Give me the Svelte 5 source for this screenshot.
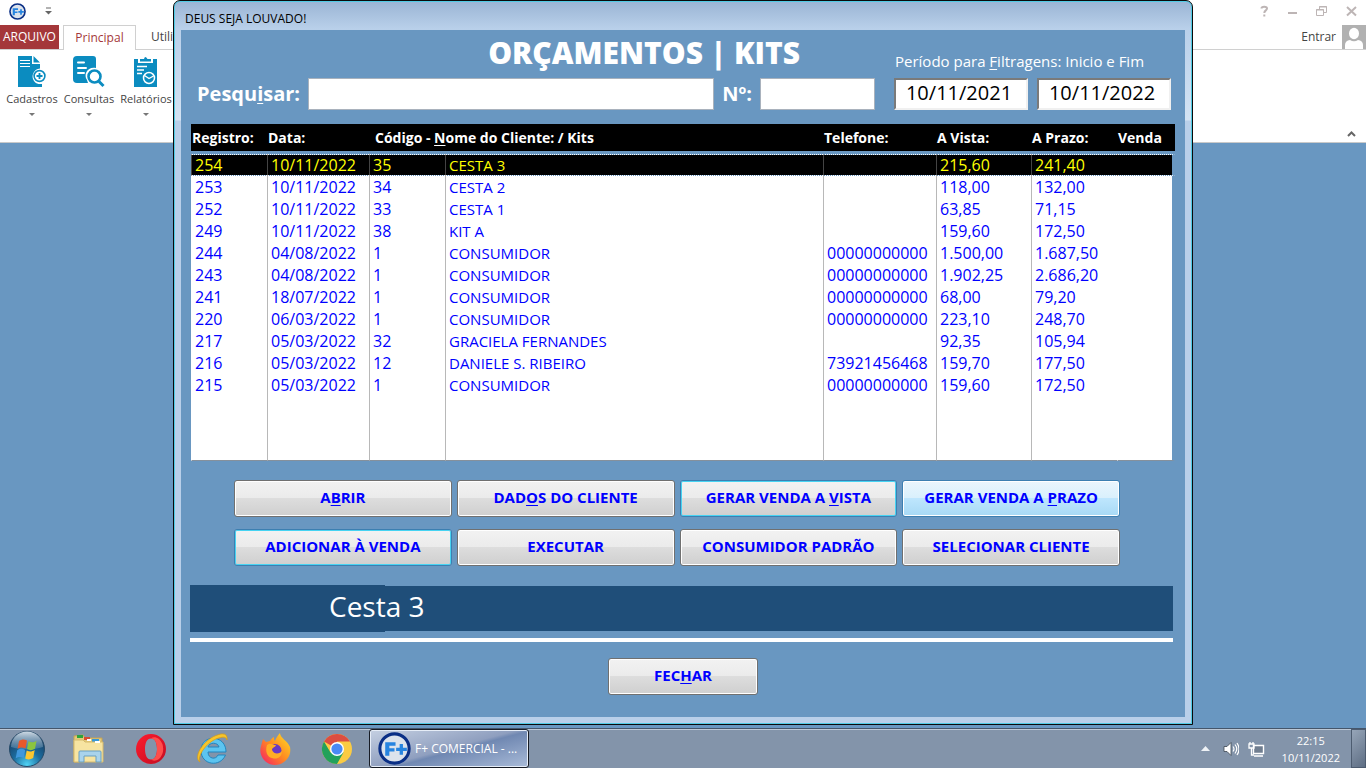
<script>
  let search = $state('');
  let number = $state('');
  let from = $state('10/11/2021');
  let to = $state('10/11/2022');
  let selected = $state(0);

  const rows = [
    ['254', '10/11/2022', '35', 'CESTA 3', '', '215,60', '241,40'],
    ['253', '10/11/2022', '34', 'CESTA 2', '', '118,00', '132,00'],
    ['252', '10/11/2022', '33', 'CESTA 1', '', '63,85', '71,15'],
    ['249', '10/11/2022', '38', 'KIT A', '', '159,60', '172,50'],
    ['244', '04/08/2022', '1', 'CONSUMIDOR', '00000000000', '1.500,00', '1.687,50'],
    ['243', '04/08/2022', '1', 'CONSUMIDOR', '00000000000', '1.902,25', '2.686,20'],
    ['241', '18/07/2022', '1', 'CONSUMIDOR', '00000000000', '68,00', '79,20'],
    ['220', '06/03/2022', '1', 'CONSUMIDOR', '00000000000', '223,10', '248,70'],
    ['217', '05/03/2022', '32', 'GRACIELA FERNANDES', '', '92,35', '105,94'],
    ['216', '05/03/2022', '12', 'DANIELE S. RIBEIRO', '73921456468', '159,70', '177,50'],
    ['215', '05/03/2022', '1', 'CONSUMIDOR', '00000000000', '159,60', '172,50']
  ];

  // Each label is split around its access key.
  const actions = [
    { text: ['A', 'B', 'RIR'] },
    { text: ['DAD', 'O', 'S DO CLIENTE'] },
    { text: ['GERAR VENDA A ', 'V', 'ISTA'], kind: 'glow' },
    { text: ['GERAR VENDA A ', 'P', 'RAZO'], kind: 'hot' },
    { text: ['ADICIONAR À VENDA', '', ''], kind: 'glow' },
    { text: ['EXECUTAR', '', ''] },
    { text: ['CONSUMIDOR PADRÃO', '', ''] },
    { text: ['SELECIONAR CLIENTE', '', ''] }
  ];
</script>

{#snippet logo(size)}
  <svg width={size} height={size} viewBox="0 0 32 32" aria-hidden="true">
    <circle cx="16" cy="16" r="14.2" fill="#dce3ec" stroke="#0a2f86" stroke-width="3" />
    <path d="M7 10h10v3.4h-6v2.4h5v3.2h-5v4H7zM21 11.6h3.2v3.6H28v3.2h-3.8V22H21v-3.6h-3.4v-3.2H21z" fill="#2684e0" />
  </svg>
{/snippet}

<div class="screen">
  <main class="desktop">
    <section class="ribbon">
      <div class="quick">
        {@render logo(17)}
        <svg width="7" height="8" viewBox="0 0 7 8" aria-hidden="true"><path d="M1 1h5" stroke="#666" /><path d="M0 4h7L3.500 7.500z" fill="#666" /></svg>
        <div class="window-tools">
          <svg width="9" height="12" viewBox="0 0 9 12"><path d="M1.500 3.500C1.500 1 7 1 7 3.500 7 5.500 4.300 5.300 4.300 8M4.300 9.500v2" fill="none" stroke="#bdb5b5" stroke-width="2" /></svg>
          <svg width="9" height="12" viewBox="0 0 9 12"><path d="M0 8h9" stroke="#bdb5b5" stroke-width="2" /></svg>
          <svg width="11" height="12" viewBox="0 0 11 12"><path d="M3.500 4V1.500h7v6H8M3 2h8M.5 4.500h7v6h-7zM0 5h8" fill="none" stroke="#bdb5b5" /></svg>
          <svg width="11" height="12" viewBox="0 0 11 12"><path d="M1 2l9 8.500M10 2L1 10.500" stroke="#bdb5b5" stroke-width="2" /></svg>
        </div>
      </div>
      <nav class="tabs">
        <button class="file">ARQUIVO</button>
        <button class="tab current">Principal</button>
        <button class="tab">Utilitários</button>
        <a class="signin" href="#entrar">Entrar</a>
        <svg class="avatar" width="24" height="24" viewBox="0 0 24 24" aria-hidden="true">
          <path d="M0 0h24v24H0z" fill="#b1b1b1" />
          <ellipse cx="12" cy="8.500" rx="5" ry="5.700" fill="#fff" />
          <path d="M3 24v-4c0-3 2-4.500 5-5 2.500 1.600 5.500 1.600 8 0 3 .5 5 2 5 5v4z" fill="#fff" />
        </svg>
      </nav>
      <div class="groups">
        <button class="group">
          <svg width="32" height="32" viewBox="0 0 32 32">
            <path d="M2 0h14v8h8v4.500a8 8 0 0 0-6 12.500c1 1.500 2.500 2.600 4.500 3H26v3H2zM17.500 0L24 6.500h-6.500z" fill="#0b8cc0" />
            <path d="M4 4.500h10M4 7.500h10M4 10.500h10" stroke="#fff" />
            <circle cx="23.500" cy="20" r="5.400" fill="#fff" stroke="#0b8cc0" stroke-width="1.600" />
            <path d="M23.500 17v6M20.500 20h6" stroke="#0b8cc0" stroke-width="1.800" />
          </svg>
          <span>Cadastros</span><i></i>
        </button>
        <button class="group">
          <svg width="32" height="32" viewBox="0 0 32 32">
            <path d="M4 0h16q3 0 3 3v9c-8-2-13 6-9 12l1 3H4q-4 0-4-4V4q0-4 4-4z" fill="#0b8cc0" />
            <path d="M5 6.500h6M5 12h8M5 17h6" stroke="#fff" stroke-width="2" stroke-linecap="round" />
            <circle cx="21.500" cy="20.500" r="6" fill="#fff" stroke="#0b8cc0" stroke-width="2.600" />
            <path d="M26 25.500l4.500 4.500" stroke="#0b8cc0" stroke-width="3" />
          </svg>
          <span>Consultas</span><i></i>
        </button>
        <button class="group">
          <svg width="32" height="32" viewBox="0 0 32 32">
            <path d="M4 3h4v4h15V3h4v28H4z" fill="#0b8cc0" />
            <path d="M10 5.500V3h4q1-4 3.500 0H21v2.500z" fill="#0b8cc0" />
            <path d="M7 10.500h10M7 14h7M7 17.500h5" stroke="#fff" stroke-width="1.400" />
            <circle cx="19" cy="22" r="5.500" fill="none" stroke="#fff" stroke-width="1.500" />
            <path d="M14.500 19.500l4.500 3 4.500-2.500" fill="none" stroke="#fff" stroke-width="1.400" />
          </svg>
          <span>Relatórios</span><i></i>
        </button>
        <svg class="collapse" width="9" height="6" viewBox="0 0 9 6"><path d="M1 5l3.500-3.500L8 5" fill="none" stroke="#666" stroke-width="2" /></svg>
      </div>
    </section>

    <div class="stage">
      <section class="dialog" aria-label="Orçamentos">
        <header class="caption">DEUS SEJA LOUVADO!</header>
        <div class="form">
          <div class="filters">
            <h1>ORÇAMENTOS | KITS</h1>
            <label class="period" for="from">Período para <u>F</u>iltragens: Inicio e Fim</label>
            <div class="fields">
              <label for="search">Pesqu<u>i</u>sar:</label>
              <input id="search" class="wide" bind:value={search} />
              <label for="number">Nº:</label>
              <input id="number" class="short" bind:value={number} />
            </div>
            <div class="dates">
              <input id="from" bind:value={from} />
              <input aria-label="Fim" bind:value={to} />
            </div>
          </div>

          <table>
            <colgroup>
              <col class="c-id" /><col class="c-date" /><col class="c-code" /><col />
              <col class="c-phone" /><col class="c-cash" /><col class="c-term" /><col class="c-sale" />
            </colgroup>
            <thead>
              <tr>
                <th>Registro:</th><th>Data:</th><th class="client" colspan="2">Código - <u>N</u>ome do Cliente: / Kits</th>
                <th>Telefone:</th><th>A Vista:</th><th>A Prazo:</th><th>Venda</th>
              </tr>
            </thead>
            <tbody>
              {#each rows as row, r}
                <tr class:selected={selected === r} onclick={() => (selected = r)}>
                  {#each row as cell, c}<td class:name={c === 3}>{cell}</td>{/each}<td></td>
                </tr>
              {/each}
              <tr class="rest"><td></td><td></td><td></td><td></td><td></td><td></td><td></td><td></td></tr>
            </tbody>
          </table>

          <div class="actions">
            {#each actions as { text, kind }}
              <button class="push {kind ?? ''}">{text[0]}<u>{text[1]}</u>{text[2]}</button>
            {/each}
          </div>

          <div class="banner"><span>Cesta 3</span></div>
          <hr />
          <button class="push close">FEC<u>H</u>AR</button>
        </div>
      </section>
    </div>
  </main>

  <footer class="taskbar">
    <button class="launch" aria-label="Iniciar">
      <svg width="38" height="38" viewBox="0 0 38 38">
        <defs>
          <radialGradient id="orb" cx=".5" cy=".95" r=".9"><stop offset="0" stop-color="#4fd3f5" /><stop offset=".45" stop-color="#1c6c9e" /><stop offset="1" stop-color="#16375c" /></radialGradient>
          <linearGradient id="shine" x2="0" y2="1"><stop stop-color="#e2edf5" stop-opacity=".9" /><stop offset="1" stop-color="#9dbdd3" stop-opacity=".25" /></linearGradient>
        </defs>
        <circle cx="19" cy="19" r="17.500" fill="url(#orb)" stroke="#254a68" />
        <path d="M3 17a16 15.500 0 0 1 32 0c-10 3-22 3-32 0z" fill="url(#shine)" />
        <path d="M11 11c3-2 5-2 8-.5l-1.500 8c-3-1.500-5-1.300-8 .3z" fill="#e9592a" />
        <path d="M20.500 11.300c3 1.500 5 1.300 8-.5l-1.500 8c-3 1.700-5 2-8 .3z" fill="#8bc43f" />
        <path d="M9.200 20.200c3-1.800 5-1.800 8-.3l-1.500 8c-3-1.500-5-1.300-8 .3z" fill="#3f97dc" />
        <path d="M18.700 20.500c3 1.600 5 1.400 8-.4l-1.500 8c-3 1.700-5 1.900-8 .4z" fill="#fbc630" />
      </svg>
    </button>
    <button class="pin" aria-label="Explorador">
      <svg width="34" height="34" viewBox="0 0 34 34">
        <path d="M2 4l9-1 2 3h17v23l-28 1z" fill="#e5c978" stroke="#c3a354" />
        <path d="M5 3h6v3H5z" fill="#2da33d" /><path d="M12 5h6v3h-6z" fill="#d94c32" /><path d="M20 7h7v3h-7z" fill="#3798d8" />
        <path d="M2 8h9l2 2h18v20H2z" fill="#f7e4a1" stroke="#d6ba6d" />
        <path d="M15 7h4v2h-4zM23 9h5v2h-5z" fill="#fff" />
        <path d="M7 30V20q0-1 1-1h20q1 0 1 1v10h-5v-6H12v6z" fill="#a9d3ec" stroke="#689fc1" />
      </svg>
    </button>
    <button class="pin" aria-label="Opera">
      <svg width="32" height="32" viewBox="0 0 32 32">
        <defs><linearGradient id="op" x2="1" y2="1"><stop stop-color="#ff1b2d" /><stop offset="1" stop-color="#c20d22" /></linearGradient></defs>
        <path d="M16 1a15 15 0 1 0 0 30 15 15 0 0 0 0-30zm0 4.500c4.200 0 6 4.800 6 10.500s-1.800 10.500-6 10.500-6-4.800-6-10.500 1.800-10.500 6-10.500z" fill="url(#op)" fill-rule="evenodd" />
        <path d="M16 5.500c2-1.700 5-1.500 8 .5a14 14 0 0 1 0 20c-3 2-6 2.200-8 .5 4.200 0 6-4.800 6-10.500S20.200 5.500 16 5.500z" fill="#ff4e4b" />
      </svg>
    </button>
    <button class="pin" aria-label="Internet Explorer">
      <svg width="34" height="34" viewBox="0 0 34 34">
        <path d="M30 20H12c0 7 8 8 10 3h7.500C24 36 5 33 5 18.500 5 2 30 2 30 20zm-7-5c-1-5-10-5-11 0z" fill="#5cc4f0" stroke="#2385bd" />
        <path d="M4 30C-3 26 6 9 20 3.500c7-3 12-2 11 4.500-1-4-5-3-10-1.500C10 11 1 24 4 30z" fill="#f7c52c" stroke="#d99b10" stroke-width=".7" />
      </svg>
    </button>
    <button class="pin" aria-label="Firefox">
      <svg width="32" height="32" viewBox="0 0 32 32">
        <defs><linearGradient id="fx" x1="1" x2="0" y2="1"><stop stop-color="#ffe226" /><stop offset=".5" stop-color="#ff8a20" /><stop offset="1" stop-color="#f5156c" /></linearGradient></defs>
        <path d="M4 6l3 3 4-1c1-2 2-3 4-4 0 2 0 3 1 4 1-3 3-6 5-8 0 5 8 8 10 14C33 24 25 32 16 32 6 32-1 22 2 13c1-3 1-4 2-7z" fill="url(#fx)" />
        <circle cx="16" cy="17.500" r="6.500" fill="#6939c4" />
        <path d="M8 12c4-3 6 0 9 0-1 3-4 2-4 5 2 5 8 4 10 1 0 6-5 9-10 7-5-1-7-7-5-13z" fill="#ffad24" />
      </svg>
    </button>
    <button class="pin" aria-label="Chrome">
      <svg width="32" height="32" viewBox="0 0 32 32">
        <circle cx="16" cy="16" r="15" fill="#fbcb43" />
        <path d="M16 16L3 8.500A15 15 0 0 1 29 8.500H16z" fill="#dc4e41" />
        <path d="M3 8.500A15 15 0 0 0 16 31l6.500-11.500L16 16 9.500 19.500z" fill="#22a15b" />
        <circle cx="16" cy="16" r="7" fill="#fff" /><circle cx="16" cy="16" r="5.600" fill="#4a8af4" />
      </svg>
    </button>
    <button class="task">{@render logo(33)}<span>F+ COMERCIAL - ...</span></button>
    <div class="tray">
      <svg width="9" height="5" viewBox="0 0 9 5"><path d="M0 5h9L4.500 0z" fill="#eef2f6" /></svg>
      <svg width="16" height="16" viewBox="0 0 16 16"><path d="M1 5.500h3l4-4v13l-4-4H1z" fill="#fff" stroke="#3d4652" stroke-width=".8" /><path d="M10 5.500q2 2.500 0 5M12 3.500q3.500 4.500 0 9M14 2q4 6 0 12" fill="none" stroke="#fff" stroke-width="1.200" /></svg>
      <svg width="17" height="16" viewBox="0 0 17 16"><path d="M5.500 4.500h10v8h-10z" fill="#707e90" stroke="#fff" stroke-width="1.400" /><path d="M6 15h9" stroke="#fff" stroke-width="1.500" /><path d="M1 3h5v4H1zM2 1v2M5 1v2M3.500 7v7H6" fill="none" stroke="#fff" stroke-width="1.300" /></svg>
      <time>22:15<br />10/11/2022</time>
      <button class="peek" aria-label="Mostrar área de trabalho"></button>
    </div>
  </footer>
</div>

<style>
  :global(body) { margin: 0; }
  * { box-sizing: border-box; }
  button, input { font: inherit; margin: 0; }
  u { text-underline-offset: 2px; text-decoration-thickness: 1px; }
  .screen { min-height: 100vh; display: flex; flex-direction: column; font: 12px/16px "Open Sans", "Noto Sans", sans-serif; color: #444; }
  .desktop { flex: 1; display: grid; grid-template-rows: auto 1fr; background: #6997c1; }

  .ribbon { grid-area: 1 / 1; background: #fff; border-bottom: 1px solid #c9c9c9; }
  .quick { height: 25px; display: flex; align-items: center; gap: 19px; padding: 0 9px 3px 9px; }
  .window-tools { display: flex; gap: 19px; margin-left: auto; }
  .tabs { height: 25px; display: flex; align-items: stretch; border-bottom: 1px solid #d0d0d0; }
  .tabs button { border: 0; background: none; color: #444; padding: 0 15px; }
  .tabs .file { background: #a4373a; color: #fff; width: 59px; padding: 0; margin-right: 4px; }
  .tabs .current { width: 73px; padding: 0; color: #a4373a; background: #fff; border: 1px solid #d0d0d0; border-bottom: 0; margin-bottom: -1px; }
  .signin { margin-left: auto; padding: 4px 6px; color: #444; text-decoration: none; }
  .groups { height: 92px; display: flex; align-items: flex-start; padding: 6px 10px 0 4px; gap: 1px; }
  .group { width: 56px; border: 0; padding: 0; background: none; color: #444; display: flex; flex-direction: column; align-items: center; line-height: 22px; font-size: 11px; white-space: nowrap; }
  .group i { margin-top: 3px; border: 3px solid transparent; border-top-color: #777; border-bottom: 0; }
  .collapse { margin: 75px 0 0 auto; }

  .stage { grid-area: 1 / 1 / span 2; display: flex; justify-content: center; align-items: flex-start; pointer-events: none; z-index: 1; }
  .dialog { pointer-events: auto; width: 100%; max-width: 1020px; border: 1px solid #0a0a0a; border-radius: 7px 7px 0 0; padding: 0 7px 7px; background: linear-gradient(#9ab4d4, #b9d0ea 28px, #d4e3f3 119px, #b9cfe9 120px); box-shadow: inset 0 0 0 1px #50cbe5; }
  .caption { height: 29px; padding: 10px 4px 0; font-size: 12px; line-height: 16px; color: #000; }
  .form { background: #6997c1; padding: 8px 10px 22px; display: flex; flex-direction: column; }

  .filters { display: grid; grid-template-columns: 1fr 277px; column-gap: 19px; padding: 0 4px 0 6px; color: #fff; }
  h1 { margin: 0; justify-self: end; padding-right: 75px; font-size: 30px; line-height: 30px; font-weight: 800; }
  .period { align-self: end; font-size: 15px; line-height: 14px; white-space: nowrap; padding-left: 1px; }
  .fields, .dates { display: flex; align-items: center; margin-top: 10px; font-size: 20px; font-weight: 700; gap: 8px; }
  .fields input { height: 32px; border: 1px solid #a9b2bd; background: #fff; min-width: 0; padding: 0 4px; font-weight: 400; }
  .fields .wide { flex: 1; }
  .fields .short { width: 115px; }
  .dates { gap: 9px; }
  .dates input { flex: 1; min-width: 0; height: 32px; padding: 0 4px 4px 0; border: 2px solid; border-color: #7a7a7a #f0f0f0 #f0f0f0 #7a7a7a; text-align: center; font-size: 20px; font-weight: 400; color: #000; background: #fff; }

  table { margin: 14px 0 19px; border-spacing: 0; table-layout: fixed; width: 100%; font-size: 16px; line-height: 20px; }
  .c-id { width: 76px; } .c-date { width: 102px; } .c-code { width: 76px; } .c-phone { width: 113px; }
  .c-cash { width: 95px; } .c-term { width: 86px; } .c-sale { width: 58px; }
  th { height: 30px; padding: 0 0 0 1px; text-align: left; font-size: 14px; color: #fff; background: #000 padding-box; border-bottom: 3px solid transparent; white-space: nowrap; }
  .client { padding-left: 6px; }
  td { height: 22px; padding: 0 0 0 3px; color: #00f; background: #fff padding-box; border-left: 1px solid #b8b8b8; white-space: nowrap; }
  td:first-child { border-left-color: #fff; }
  td:last-child { border-left-color: #fff; border-right: 3px solid transparent; }
  .name { font-size: 15px; }
  .selected td { color: #ff0; background: #000; background-clip: padding-box; border-top: 1px dotted #fff; border-bottom: 1px dotted #fff; border-left-color: #444; }
  .selected td:last-child { border-left-color: #000; }
  .rest td { height: 65px; border-bottom: 1px solid #85909c; }

  .actions { display: grid; grid-template-columns: repeat(4, 1fr); gap: 12px 5px; padding: 0 55px 0 43px; }
  .push { height: 37px; border: 1px solid #707070; border-radius: 3px; padding: 0 0 3px; color: #00f; font-size: 15px; font-weight: 700; background: linear-gradient(#f2f2f2, #ebebeb 49%, #dddddd 50%, #cfcfcf); box-shadow: inset 0 0 0 1px #fff; }
  .glow { border-color: #3c7fb1; box-shadow: inset 0 0 0 1px #46d3f2; }
  .hot { border-color: #3c7fb1; background: linear-gradient(#eaf6fd, #d9f0fc 49%, #bee6fd 50%, #a7d9f5); }
  .banner { height: 45px; margin: 20px 2px 0 -1px; display: flex; background: #1f4e79; color: #fff; font-size: 28px; line-height: 40px; }
  .banner span { width: 195px; margin: -1px 0; padding: 1px 0 0 139px; background: #1f4e79; white-space: nowrap; }
  hr { width: auto; height: 4px; border: 0; margin: 7px 2px 16px -1px; background: #fff; }
  .close { width: 150px; align-self: center; }

  .taskbar { height: 40px; display: flex; align-items: center; background: #8394aa; border-top: 1px solid #45566b; box-shadow: inset 0 1px #bcc8d6; color: #fff; overflow: hidden; }
  .launch, .pin { border: 0; padding: 0; background: none; display: grid; place-items: center; }
  .launch { width: 54px; margin-right: 4px; }
  .pin { width: 62px; }
  .task { width: 160px; height: 39px; display: flex; align-items: center; gap: 4px; margin-left: 1px; padding: 0 8px; border: 1px solid #171c25; border-radius: 3px; color: #fff; background: linear-gradient(165deg, #c5d0e2, #8f9fbf 50%, #7088b2 55%, #a9bbd8); box-shadow: inset 0 0 0 1px #e6edf7; white-space: nowrap; }
  .tray { margin-left: auto; height: 100%; display: flex; align-items: center; gap: 9px; }
  .tray svg:first-child { margin-right: 4px; }
  time { text-align: center; font-size: 11px; line-height: 17px; margin-left: 8px; }
  .peek { width: 15px; height: 100%; margin-left: 2px; border: 1px solid #4d5c70; background: linear-gradient(135deg, #96a5b8, #5e6e84); padding: 0; }
</style>
